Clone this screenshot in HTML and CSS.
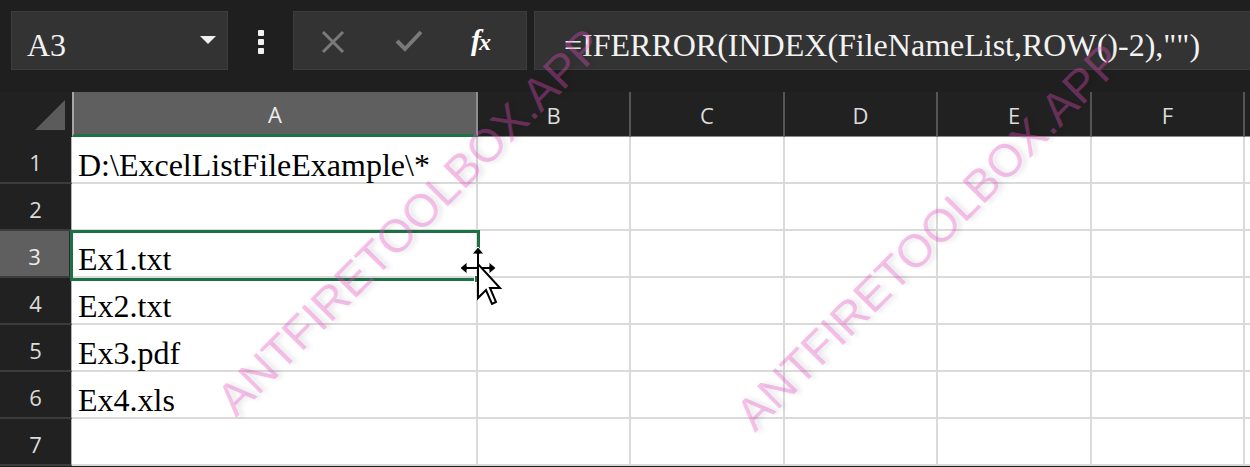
FILE: index.html
```html
<!DOCTYPE html>
<html>
<head>
<meta charset="utf-8">
<link rel="stylesheet" href="styles.css">
</head>
<body>
<div class="app">
  <div class="toolbar">
    <div class="namebox"><span class="ref">A3</span><span class="caret"></span></div>
    <div class="dots"><i></i><i></i><i></i></div>
    <div class="fxbox">
      <svg class="ic-x" width="24" height="24" viewBox="0 0 24 24"><path d="M2 2 L22 22 M22 2 L2 22" stroke="#7a7a7a" stroke-width="3" fill="none"/></svg>
      <svg class="ic-ok" width="28" height="24" viewBox="0 0 28 24"><path d="M2 12 L10 20 L26 3" stroke="#7a7a7a" stroke-width="4" fill="none"/></svg>
      <span class="ic-fx"><span class="f">f</span><span class="x">x</span></span>
    </div>
    <div class="formula">=IFERROR(INDEX(FileNameList,ROW()-2),"")</div>
  </div>
  <div class="sheet">
    <div class="corner"><svg width="32" height="32" viewBox="0 0 32 32"><polygon points="31,1 31,31 1,31" fill="#5b5b5b"/></svg></div>
    <div class="colhead sel">A</div>
    <div class="colhead">B</div>
    <div class="colhead">C</div>
    <div class="colhead">D</div>
    <div class="colhead">E</div>
    <div class="colhead">F</div>
    <div class="colhead edge"></div>

    <div class="rowhead">1</div>
    <div class="cell">D:\ExcelListFileExample\*</div><div class="cell"></div><div class="cell"></div><div class="cell"></div><div class="cell"></div><div class="cell"></div><div class="cell"></div>

    <div class="rowhead">2</div>
    <div class="cell"></div><div class="cell"></div><div class="cell"></div><div class="cell"></div><div class="cell"></div><div class="cell"></div><div class="cell"></div>

    <div class="rowhead sel">3</div>
    <div class="cell">Ex1.txt</div><div class="cell"></div><div class="cell"></div><div class="cell"></div><div class="cell"></div><div class="cell"></div><div class="cell"></div>

    <div class="rowhead">4</div>
    <div class="cell">Ex2.txt</div><div class="cell"></div><div class="cell"></div><div class="cell"></div><div class="cell"></div><div class="cell"></div><div class="cell"></div>

    <div class="rowhead">5</div>
    <div class="cell">Ex3.pdf</div><div class="cell"></div><div class="cell"></div><div class="cell"></div><div class="cell"></div><div class="cell"></div><div class="cell"></div>

    <div class="rowhead">6</div>
    <div class="cell">Ex4.xls</div><div class="cell"></div><div class="cell"></div><div class="cell"></div><div class="cell"></div><div class="cell"></div><div class="cell"></div>

    <div class="rowhead">7</div>
    <div class="cell"></div><div class="cell"></div><div class="cell"></div><div class="cell"></div><div class="cell"></div><div class="cell"></div><div class="cell"></div>
  </div>

  <div class="selbox"></div>
  <div class="handle"></div>

  <div class="wm wm1">ANTFIRETOOLBOX.APP</div>
  <div class="wm wm2">ANTFIRETOOLBOX.APP</div>

  <svg class="cursor" width="48" height="66" viewBox="0 0 48 66">
    <polygon points="22,1 16,8 20.5,8 20.5,20.5 11,20.5 11,16 4,22 11,28 11,23.5 33,23.5 33,28 40,22 33,16 33,20.5 23.5,20.5 23.5,8 28,8" fill="#000" stroke="#fff" stroke-width="1"/>
    <polygon points="22,18 22,52 30,44 36,58 40,56 34,42 44,42" fill="#fff" stroke="#000" stroke-width="2" stroke-linejoin="miter"/>
  </svg>
</div>
</body>
</html>
```

FILE: styles.css
```css
* { box-sizing: border-box; }

html, body {
  margin: 0;
  padding: 0;
}

body {
  background: #1f1f1f;
  font-family: "Liberation Serif", serif;
}

.app {
  position: relative;
  width: 1250px;
  height: 467px;
  overflow: hidden;
  background: #1f1f1f;
}

/* ---------- formula toolbar ---------- */
.toolbar {
  display: flex;
  align-items: flex-start;
  height: 92px;
  padding: 11px 0 0 11px;
  background: #1f1f1f;
}

.namebox {
  width: 217px;
  height: 59px;
  background: #333333;
  border: 1px solid #3d3d3d;
  display: flex;
  align-items: center;
  padding: 8px 11px 0 15px;
  color: #f2f2f2;
  font-size: 32px;
}

.ref {
  flex: 1;
  line-height: 32px;
}

.caret {
  align-self: flex-start;
  margin-top: 16px;
  width: 0;
  height: 0;
  border-left: 8px solid transparent;
  border-right: 8px solid transparent;
  border-top: 8px solid #f0f0f0;
}

.dots {
  display: flex;
  flex-direction: column;
  gap: 3px;
  margin: 19px 0 0 30px;
}

.dots i {
  display: block;
  width: 6px;
  height: 6px;
  border-radius: 1px;
  background: #f0f0f0;
}

.fxbox {
  margin-left: 29px;
  width: 234px;
  height: 59px;
  background: #333333;
  border: 1px solid #3d3d3d;
  display: flex;
  align-items: center;
}

.ic-x { margin-left: 27px; margin-top: 3px; }
.ic-ok { margin-left: 50px; margin-top: 0; }
.ic-fx {
  margin-left: 48px;
  color: #ffffff;
  font-family: "Liberation Serif", serif;
  font-style: italic;
  font-weight: bold;
  line-height: 1;
  margin-top: -2px;
}
.ic-fx .f { font-size: 30px; }
.ic-fx .x { font-size: 24px; margin-left: -2px; }

.formula {
  margin-left: 7px;
  flex: 1;
  height: 59px;
  background: #333333;
  border: 1px solid #3d3d3d;
  border-right: none;
  padding: 8px 0 0 29px;
  display: flex;
  align-items: center;
  color: #f2f2f2;
  font-size: 32px;
  white-space: nowrap;
  line-height: 32px;
}

/* ---------- sheet grid ---------- */
.sheet {
  display: grid;
  grid-template-columns: 72px 406px 153px 154px 153px 154px 153px 5px;
  grid-template-rows: 45px repeat(7, 47px);
  background: #ffffff;
}

.corner {
  background: #212121;
  display: flex;
  align-items: flex-end;
  padding: 0 0 6px 34px;
}

.colhead {
  background: #212121;
  color: #dcdcdc;
  font-family: "Open Sans", "Noto Sans", sans-serif;
  font-size: 22px;
  display: flex;
  align-items: center;
  justify-content: center;
  border-right: 2px solid #555555;
  border-bottom: 1px solid #8a8a8a;
  padding-top: 1px;
}

.colhead.sel {
  background: #5f5f5f;
  border-left: 2px solid #a5a5a5;
  border-right: 2px solid #8e8e8e;
  border-bottom: 3px solid #1e7145;
  color: #ececec;
}

.colhead.edge { border-right: none; }

.rowhead {
  background: #212121;
  color: #dcdcdc;
  font-family: "Open Sans", "Noto Sans", sans-serif;
  font-size: 22px;
  display: flex;
  align-items: center;
  justify-content: center;
  padding-top: 4px;
  border-bottom: 2px solid #3c3c3c;
  border-right: 1px solid #b5b5b5;
}

.rowhead.sel {
  background: #5f5f5f;
  border-right: 3px solid #2a2a2a;
  color: #ececec;
}

.cell {
  border-right: 2px solid #dadada;
  border-bottom: 2px solid #dadada;
  font-family: "Liberation Serif", serif;
  font-size: 32px;
  line-height: 40px;
  padding: 8px 0 0 6px;
  color: #000000;
  white-space: nowrap;
}

/* ---------- overlays ---------- */
.selbox {
  position: absolute;
  left: 70px;
  top: 230px;
  width: 410px;
  height: 51px;
  border: 3px solid #1e7145;
}

.handle {
  position: absolute;
  left: 474px;
  top: 275px;
  width: 8px;
  height: 8px;
  background: #1e7145;
  border: 1px solid #ffffff;
}

.wm {
  position: absolute;
  font-family: "Liberation Sans", sans-serif;
  font-size: 46px;
  line-height: 46px;
  white-space: nowrap;
  color: rgba(236, 80, 200, 0.36);
  text-shadow: 3px 3px 5px rgba(0, 0, 0, 0.10);
  transform-origin: 0 39px;
  transform: rotate(-45deg);
  pointer-events: none;
}

.wm1 { left: 236px; top: 379px; }
.wm2 { left: 755px; top: 394px; }

.cursor {
  position: absolute;
  left: 456px;
  top: 246px;
}
```
